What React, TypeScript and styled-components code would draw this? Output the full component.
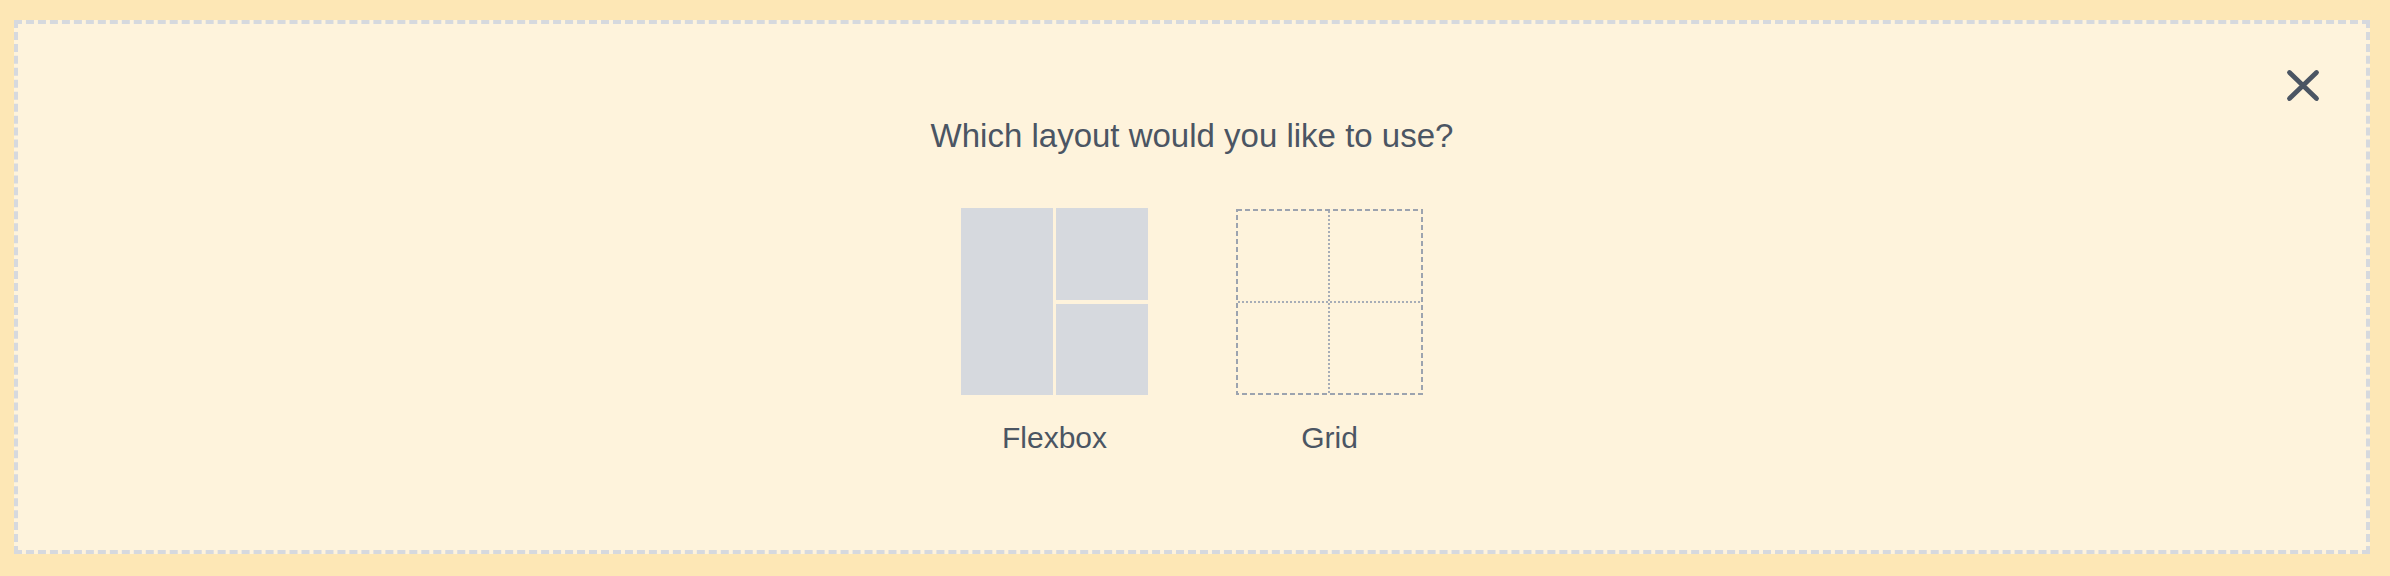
import React from "react";
import styled, { createGlobalStyle } from "styled-components";

const GlobalStyle = createGlobalStyle`
    html, body {
        margin: 0;
        padding: 0;
        background-color: #fde7b5;
        font-family: "Liberation Sans", Arial, sans-serif;
    }
`;

const Moldura = styled.div`
    position: relative;
    box-sizing: border-box;
    height: 534px;
    margin: 20px 20px 22px 14px;
    border: 4px dashed #d6d9de;
    background-color: #fef3dc;
    display: flex;
    flex-direction: column;
    align-items: center;
    padding-top: 92px;
`;

const BotaoFechar = styled.button`
    position: absolute;
    top: 45px;
    right: 45px;
    width: 36px;
    height: 34px;
    padding: 0;
    border: none;
    background: none;
    cursor: pointer;
    display: flex;
    align-items: center;
    justify-content: center;
`;

const Titulo = styled.h2`
    margin: 0;
    font-size: 33px;
    line-height: 40px;
    font-weight: normal;
    color: #4b5563;
`;

const LinhaOpcoes = styled.div`
    display: flex;
    gap: 88px;
    margin-top: 52px;
`;

const Opcao = styled.button`
    display: flex;
    flex-direction: column;
    align-items: center;
    padding: 0;
    border: none;
    background: none;
    cursor: pointer;
    font-family: inherit;
`;

const IconeFlex = styled.div`
    display: flex;
    gap: 3px;
    width: 187px;
    height: 187px;
`;

const ColunaFlex = styled.div`
    flex: 1;
    display: flex;
    flex-direction: column;
    gap: 4px;
`;

const BlocoFlex = styled.div`
    flex: 1;
    background-color: #d6d9de;
`;

const IconeGrid = styled.div`
    width: 187px;
    height: 187px;
    display: flex;
    align-items: center;
    justify-content: center;
`;

const Rotulo = styled.span<{ $topo: number }>`
    margin-top: ${(p) => p.$topo}px;
    font-size: 30px;
    line-height: 34px;
    color: #4b5563;
`;

function DesenhoGrid() {
    return (
        <svg width="187" height="186" viewBox="0 0 187 186">
            <rect
                x="1"
                y="1"
                width="185"
                height="184"
                fill="none"
                stroke="#9ca3af"
                strokeWidth="2"
                strokeDasharray="5 3"
            />
            <line x1="93" y1="2" x2="93" y2="184" stroke="#a7adb7" strokeWidth="2" strokeDasharray="2 2" />
            <line x1="2" y1="93" x2="185" y2="93" stroke="#a7adb7" strokeWidth="2" strokeDasharray="2 2" />
        </svg>
    );
}

export default function App() {
    return (
        <>
            <GlobalStyle />
            <Moldura>
                <BotaoFechar aria-label="Fechar">
                    <svg width="36" height="34" viewBox="0 0 36 34">
                        <path
                            d="M4.5 3.5 L31.5 29.5 M31.5 3.5 L4.5 29.5"
                            stroke="#4b5563"
                            strokeWidth="4.8"
                            strokeLinecap="round"
                            fill="none"
                        />
                    </svg>
                </BotaoFechar>

                <Titulo>Which layout would you like to use?</Titulo>

                <LinhaOpcoes>
                    <Opcao>
                        <IconeFlex>
                            <BlocoFlex />
                            <ColunaFlex>
                                <BlocoFlex />
                                <BlocoFlex />
                            </ColunaFlex>
                        </IconeFlex>
                        <Rotulo $topo={26}>Flexbox</Rotulo>
                    </Opcao>
                    <Opcao>
                        <IconeGrid>
                            <DesenhoGrid />
                        </IconeGrid>
                        <Rotulo $topo={26}>Grid</Rotulo>
                    </Opcao>
                </LinhaOpcoes>
            </Moldura>
        </>
    );
}
